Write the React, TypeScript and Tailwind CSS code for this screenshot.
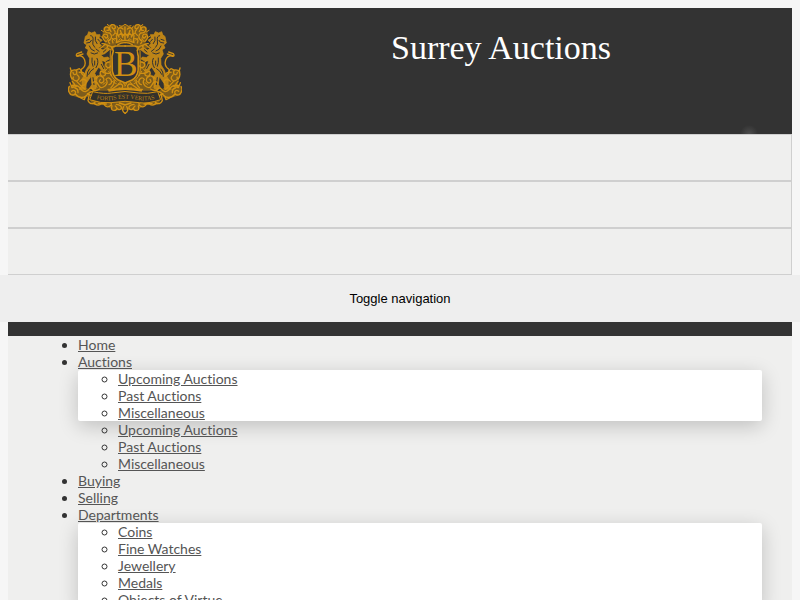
import React from 'react';

interface MenuItem {
  label: string;
  dropdown?: string[];
  submenu?: string[];
}

const auctionLinks = ['Upcoming Auctions', 'Past Auctions', 'Miscellaneous'];

const departmentLinks = ['Coins', 'Fine Watches', 'Jewellery', 'Medals', 'Objects of Virtue'];

const menu: MenuItem[] = [
  { label: 'Home' },
  { label: 'Auctions', dropdown: auctionLinks, submenu: auctionLinks },
  { label: 'Buying' },
  { label: 'Selling' },
  { label: 'Departments', dropdown: departmentLinks },
];

// One side of the crest, drawn twice
const CrestHalf: React.FC = () => (
  <g fill="none" stroke="#d08f12" strokeLinecap="round" strokeLinejoin="round">
    {/* Shading behind the scroll work */}
    <g fill="#7d5c1c" stroke="none">
      <path d="M146 52 L162 44 L178 44 L190 52 L186 100 L174 120 L140 114 L150 98 L141 80 Z" />
      <path d="M150 156 L170 150 L174 200 L211 221 L211 240 L160 242 L112 242 L110 214 L130 196 L142 182 Z" />
      <path d="M44 184 L64 178 L88 190 L90 230 L110 244 L100 260 L80 266 L44 254 L40 236 L52 222 Z" />
      <path d="M104 268 L168 276 L211 272 L211 300 L196 300 L180 302 L150 286 L112 284 Z" />
      <path d="M186 54 L198 47 L211 46 L211 98 L186 102 L182 72 Z" />
    </g>

    {/* Lion */}
    <path
      fill="#bd8417"
      strokeWidth="2"
      d="M91 80 Q89 90 87 99 L95 105 L91 114 L100 119 L96 132 L104 145 L103 165 Q91 180 88 195 L81 207 L82 226 L72 238 L92 238 L94 220 L108 199 L111 223 L103 236 L123 236 L126 204 L119 190 L131 171 L145 187 L153 183 L144 166 L140 152 L150 154 L163 147 L159 141 L147 143 L137 135 L149 131 L164 119 L156 112 L144 120 L130 114 L139 107 L132 99 L142 91 L132 84 L135 74 L124 74 L120 65 L110 69 L101 65 L98 74 Z"
    />
    <g stroke="#333333" strokeWidth="3">
      <path d="M94 91 L103 88 M95 99 L105 97 L109 91 M107 77 Q116 78 114 90 Q110 104 119 112 M121 81 Q118 92 126 101 M103 108 Q107 121 118 123 M108 129 Q118 136 128 129 M111 144 Q109 158 114 169 M126 145 Q133 157 123 173 M103 177 Q96 184 96 199 M116 176 Q105 182 101 193 M114 203 L117 224 M145 126 L153 119 M139 163 L146 176 M129 88 L134 94 M123 117 L132 124 M119 153 L119 165" />
    </g>
    <path strokeWidth="4" d="M91 199 Q75 192 79 178 Q95 168 89 150 Q82 134 68 139 Q61 138 66 131 L80 126 M68 137 L84 132" />

    {/* Mantling around the crown */}
    <path strokeWidth="4" d="M151 94 Q138 83 147 73 Q159 70 158 81 Q152 88 149 79 M164 91 Q175 79 164 69 Q149 70 148 57 Q151 47 161 53 Q165 62 156 61 M168 65 Q159 51 170 44 Q182 43 181 54 Q174 60 171 51 M174 76 Q185 67 177 60 M182 86 Q168 86 174 99 M141 101 Q155 100 158 111 M164 101 Q155 92 166 88 M136 115 L151 103 L169 110" />
    <path strokeWidth="3" d="M144 84 L137 79 M147 66 L139 61 M162 47 L157 43 M170 83 L178 91 M154 95 L161 84 M186 48 L190 55 M160 116 L169 120" />

    {/* Crown */}
    <path strokeWidth="4" d="M211 51 L211 88 M204 57 Q192 48 188 61 Q185 72 192 81 M196 61 L203 82 M184 77 Q187 90 184 98 M184 98 Q199 90 211 91 M187 105 Q201 97 211 98 M182 70 L190 77 L199 69 L205 77 L211 69" />
    <path strokeWidth="3" d="M193 47 L201 49 L210 43 M191 91 L196 86 L203 91" />

    {/* Shield rim */}
    <path strokeWidth="5" d="M211 108 L182 108 L170 112 L175 123 L171 139 L172 181 Q175 202 190 210 L211 219" />
    <path strokeWidth="3" d="M166 122 L165 181 Q168 203 184 214" />

    {/* Foliage between the lion and the shield */}
    <path strokeWidth="4" d="M163 156 Q149 157 153 169 Q162 178 167 168 M163 190 Q149 192 138 183 Q132 190 140 198 Q153 200 151 188 M124 206 Q132 191 145 203 Q151 215 139 219 Q129 216 136 208 M112 219 Q122 208 131 226 Q136 239 150 228 Q161 217 153 208 Q160 199 168 209 Q173 221 162 224 M168 233 Q181 219 177 211 M183 229 Q198 216 203 227 Q204 238 192 234 M109 234 Q118 247 134 237 M159 238 Q171 240 181 230" />
    <path strokeWidth="3" d="M157 176 L149 184 M161 184 L169 198 M127 197 L119 207 M144 223 L151 218 M171 214 L184 221 M189 222 L197 216 M126 232 L120 226 M206 220 L211 229 M154 158 L146 151" />

    {/* Side scrolls */}
    <path strokeWidth="4" d="M51 207 Q41 190 52 181 Q67 176 65 191 Q56 198 54 187 M49 185 L46 174 M62 181 L73 176 L80 184 M67 195 Q79 205 65 213 Q51 211 55 201 M73 187 Q90 184 89 199 M75 214 Q85 202 94 213 Q94 227 81 226 M66 215 L77 227 L90 238 M52 214 L59 223 L54 230" />
    <path strokeWidth="4" d="M43 229 Q35 242 48 254 Q61 258 62 246 Q57 237 50 244 M49 227 Q69 222 79 239 Q92 252 104 235 M61 252 Q76 270 94 257 Q103 245 113 244 M60 234 Q70 236 69 248 M77 264 L88 269 L92 258 M45 218 L51 233 L64 229 M97 251 L112 258" />

    {/* Lower scrolls */}
    <path strokeWidth="4" d="M103 253 L99 272 Q106 286 119 278 Q126 270 115 267 M108 266 L121 261 M118 281 Q132 290 139 280 M130 280 L154 282 M147 283 Q157 297 168 286 Q173 276 159 277 M171 288 Q166 303 181 301 Q190 295 181 288 M184 283 Q201 285 199 295 Q192 303 187 295 M193 279 L211 285 M206 290 Q198 304 211 310" />
  </g>
);

const Crest: React.FC = () => (
  <svg viewBox="39 42 342 270" className="h-[90px] w-[114px]" role="img" aria-label="Coat of arms">
    <CrestHalf />
    <g transform="translate(421 0) scale(-1 1)">
      <CrestHalf />
    </g>
    {/* Shield field */}
    <path
      d="M183 114 H239 L245 124 L247 181 Q245 199 229 206 L211 214 L193 206 Q177 199 175 181 L177 124 Z"
      fill="#333333"
    />
    <text
      x="212"
      y="197"
      textAnchor="middle"
      fill="#d08f12"
      fontSize="106"
      fontFamily="Liberation Serif, serif"
    >
      B
    </text>
    {/* Motto ribbon */}
    <path
      d="M113 245 Q149 253 169 249 Q210 240 251 249 Q275 253 308 245 L317 269 Q279 282 253 278 Q210 270 168 278 Q138 281 104 269 Z"
      fill="#33312b"
      stroke="#d08f12"
      strokeWidth="3"
    />
    <path d="M160 242 Q211 231 261 242" fill="none" stroke="#d08f12" strokeWidth="7" />
    <path id="motto" d="M118 266 Q154 275 178 269 Q211 263 244 269 Q270 275 306 265" fill="none" />
    <text fill="#bd8315" fontSize="18" fontFamily="Liberation Serif, serif">
      <textPath href="#motto" startOffset="50%" textAnchor="middle">
        FORTIS EST VERITAS
      </textPath>
    </text>
  </svg>
);

const LinkList: React.FC<{ links: string[] }> = ({ links }) => (
  <>
    {links.map((link) => (
      <li key={link}>
        <a href="#" className="text-[#555555] underline">
          {link}
        </a>
      </li>
    ))}
  </>
);

const App: React.FC = () => {
  return (
    <div className="max-h-screen overflow-hidden bg-[#f6f6f6] pt-2 font-[Lato,sans-serif] text-sm leading-[17px] text-[#333333] [font-variant-ligatures:none]">
      <header className="mx-2 flex h-[126px] items-start bg-[#333333] bg-[radial-gradient(circle_at_calc(100%-43px)_100%,#4d4d4d,#333333_9px)] pt-4">
        <a href="#" className="ml-15">
          <Crest />
        </a>
        <h1 className="flex-1 pl-7 text-center font-[Liberation_Serif,serif] text-[34px] leading-12 text-white">
          Surrey Auctions
        </h1>
      </header>

      <div className="mx-2 bg-[#efefee]">
        <div className="h-[47px] border-y border-r border-[#cfcfcf]" />
        <div className="h-[47px] border-y border-r border-[#cfcfcf]" />
        <div className="h-[47px] border-y border-r border-[#cfcfcf]" />
      </div>

      <button
        type="button"
        className="block h-[47px] w-full bg-[#eeeeee] text-center font-[Liberation_Sans,sans-serif] text-[13px] text-black"
      >
        Toggle navigation
      </button>

      <nav className="mx-2 border-t-14 border-[#333333] bg-[#efefee] pl-[70px] pr-[30px]">
        <ul className="list-disc">
          {menu.map((item) => (
            <li key={item.label}>
              <a href="#" className="text-[#555555] underline">
                {item.label}
              </a>
              {item.dropdown && (
                <ul className="list-[circle] rounded-xs bg-white pl-10 shadow-[0_5px_20px_rgba(0,0,0,0.2)]">
                  <LinkList links={item.dropdown} />
                </ul>
              )}
              {item.submenu && (
                <ul className="list-[circle] pl-10">
                  <LinkList links={item.submenu} />
                </ul>
              )}
            </li>
          ))}
        </ul>
      </nav>
    </div>
  );
};

export default App;
